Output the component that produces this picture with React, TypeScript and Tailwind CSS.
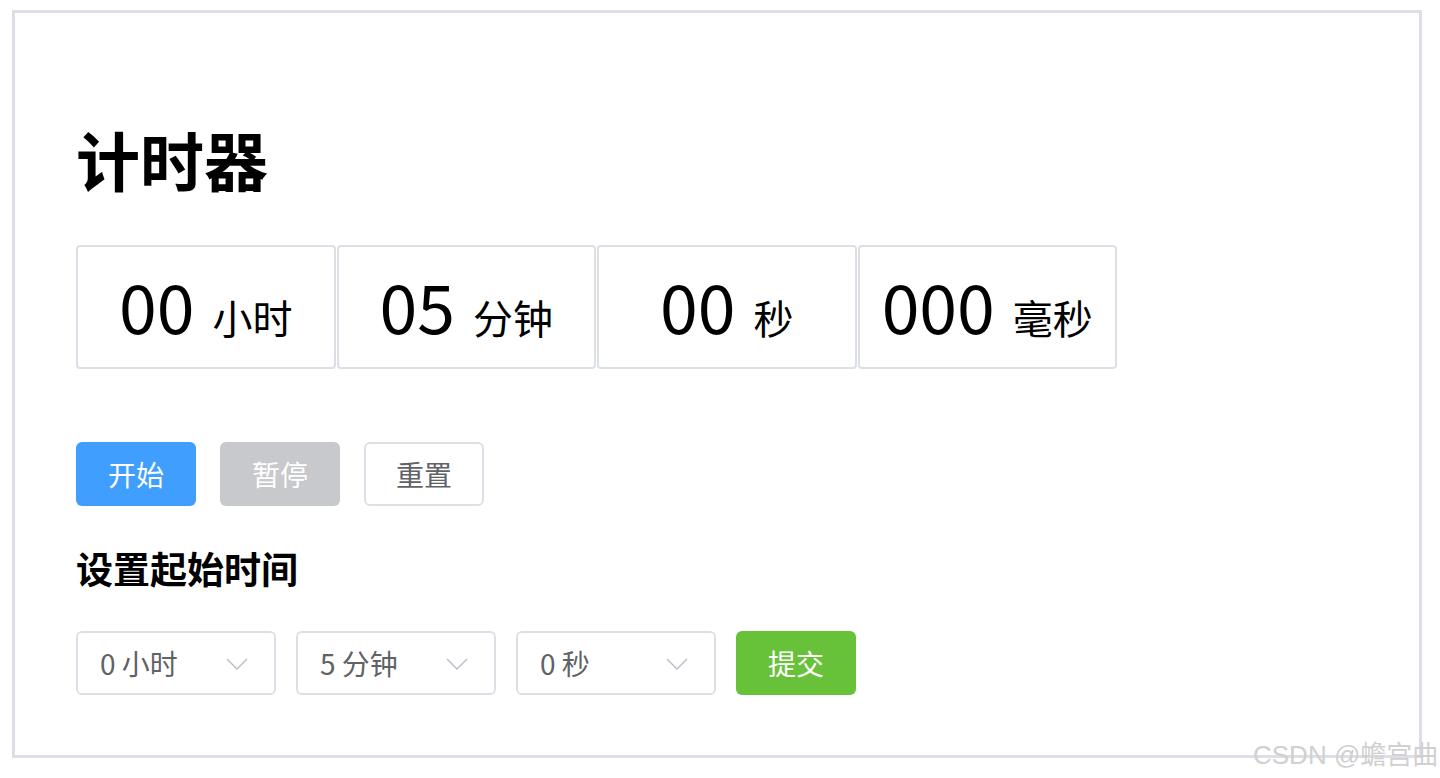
const units = [
  { value: "00", label: "小时" },
  { value: "05", label: "分钟" },
  { value: "00", label: "秒" },
  { value: "000", label: "毫秒" },
]

const selects = ["0 小时", "5 分钟", "0 秒"]

function Chevron() {
  return (
    <svg className="w-[24px] h-[24px]" viewBox="0 0 24 24" fill="none" stroke="#b8bcc4" strokeWidth={1.4}>
      <polyline points="2,8 12,18 22,8" />
    </svg>
  )
}

export default function App() {
  return (
    <div className="relative min-h-[778px] bg-white" style={{ fontFamily: '"Noto Sans CJK SC", "Noto Sans", sans-serif' }}>
      <div className="ml-[12px] mt-[10px] w-[1410px] h-[748px] border-[3px] border-[#dcdfe6] pl-[61px] pt-[107px]">
        {/* Title */}
        <h1 className="text-[64px] leading-[76px] font-bold text-black">计时器</h1>

        {/* Timer display */}
        <div className="flex gap-px mt-[49px]">
          {units.map((u, i) => (
            <div
              key={i}
              className="w-[259.5px] h-[124px] border-2 border-[#dcdfe6] rounded-[4px] flex items-baseline justify-center pt-[18px]"
            >
              <span className="text-[68px] leading-[80px] text-black">{u.value}</span>
              <span className="text-[40px] leading-[48px] text-black ml-[18px]">{u.label}</span>
            </div>
          ))}
        </div>

        {/* Controls */}
        <div className="flex gap-6 mt-[73px]">
          <button className="w-[120px] h-[64px] rounded-[6px] bg-[#409eff] text-white text-[28px]">开始</button>
          <button className="w-[120px] h-[64px] rounded-[6px] bg-[#c8c9cc] text-white text-[28px]">暂停</button>
          <button className="w-[120px] h-[64px] rounded-[6px] border-2 border-[#dcdfe6] bg-white text-[#606266] text-[28px]">重置</button>
        </div>

        <h2 className="mt-[37px] text-[37px] leading-[50px] font-bold text-black">设置起始时间</h2>

        {/* Start time */}
        <div className="flex gap-5 mt-[38px]">
          {selects.map((s) => (
            <div
              key={s}
              className="w-[200px] h-[64px] border-2 border-[#dcdfe6] rounded-[6px] flex items-center justify-between pl-[22px] pr-[25px]"
            >
              <span className="text-[28px] text-[#606266]">{s}</span>
              <Chevron />
            </div>
          ))}
          <button className="w-[120px] h-[64px] rounded-[6px] bg-[#67c23a] text-white text-[28px]">提交</button>
        </div>
      </div>

      {/* Watermark */}
      <div className="absolute left-[1253px] top-[727px] text-[26px] leading-[36px] text-[#d0d0d0]" style={{ fontFamily: '"Liberation Sans", "Noto Sans CJK SC", sans-serif' }}>
        CSDN @蟾宫曲
      </div>
    </div>
  )
}
